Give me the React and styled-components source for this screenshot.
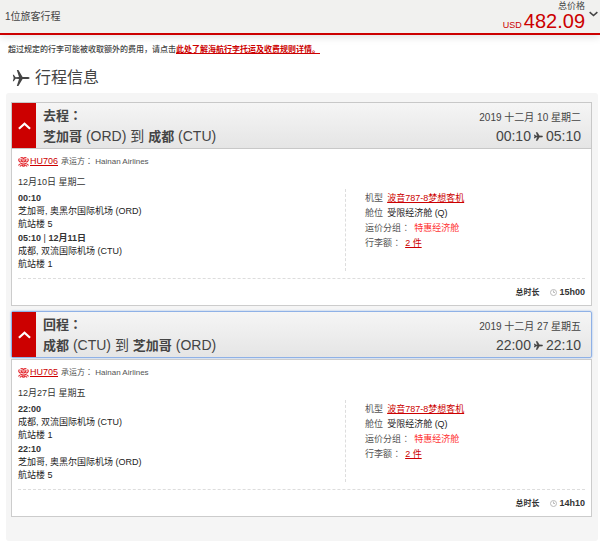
import { useState } from "react";
import styled, { createGlobalStyle } from "styled-components";

const GlobalStyle = createGlobalStyle`
  * {
    box-sizing: border-box;
  }
  body {
    margin: 0;
    background-color: #fff;
    color: #444;
    font-family: "Liberation Sans", "Noto Sans CJK SC", sans-serif;
    font-size: 9px;
    line-height: 13px;
  }
  button {
    font: inherit;
    color: inherit;
    cursor: pointer;
  }
`;

const TopBar = styled.header`
  display: flex;
  justify-content: space-between;
  height: 35px;
  padding-left: 5px;
  background-color: #f1f1ef;
  border-bottom: 2px solid #cc0000;
  box-shadow: 0 2px 8px rgba(0, 0, 0, 0.12);
`;

const Travellers = styled.div`
  font-size: 10px;
  line-height: 33px;
`;

const PriceBox = styled.div`
  display: flex;
  gap: 4px;
`;

const PriceLabel = styled.div`
  line-height: 12px;
  text-align: right;
`;

const Price = styled.div`
  color: #cc0000;
  font-size: 20px;
  line-height: 18px;
`;

const Currency = styled.span`
  font-size: 9px;
  margin-right: 2px;
`;

const PriceToggle = styled.button`
  display: flex;
  align-items: center;
  width: 11px;
  height: 28px;
  padding: 0;
  border: 0;
  background: none;
`;

const Notice = styled.p`
  margin: 8px 8px 0;
  font-size: 8px;
  font-weight: 500;
  line-height: 13px;
`;

const Link = styled.a`
  color: #cc0000;
  text-decoration: underline;
  font-weight: ${(props) => (props.$bold ? 700 : 400)};
`;

const Title = styled.h1`
  display: flex;
  align-items: center;
  gap: 5px;
  margin: 12px 12px 5px;
  font-size: 16px;
  font-weight: 400;
  line-height: 20px;
`;

const Panel = styled.main`
  display: flex;
  flex-direction: column;
  gap: 5px;
  margin: 0 2px 0 6px;
  padding: 9px 6px 24px 5px;
  background-color: #f5f5f5;
  border-radius: 3px;
`;

const CardHead = styled.button`
  display: flex;
  width: 100%;
  height: 47px;
  padding: 0;
  text-align: left;
  background: linear-gradient(#f5f5f5, #e5e5e5);
  border: 1px solid ${(props) => (props.$active ? "#8fb1e6" : "#c8c8c8")};
  border-radius: ${(props) => (props.$active ? "2px" : "0")};
  box-shadow: ${(props) => (props.$active ? "0 0 2px #8fb1e6" : "none")};
  outline: none;
`;

const Marker = styled.span`
  display: flex;
  align-items: center;
  justify-content: center;
  align-self: stretch;
  width: 24px;
  color: #fff;
  background-color: #cc0000;
`;

const Route = styled.span`
  flex: 1;
  padding: 2px 0 0 7px;
  font-size: 14px;
  line-height: 20px;
`;

const RouteLine = styled.span`
  display: block;
`;

const City = styled.strong`
  font-size: 13px;
`;

// full-width colon, centred in its cell
const Colon = styled.span`
  font-family: "Noto Sans CJK TC", sans-serif;
  line-height: 1;
`;

const When = styled.span`
  padding: 6px 10px 0 0;
  text-align: right;
`;

const DateText = styled.span`
  display: block;
  font-size: 10px;
  line-height: 18px;
`;

const Times = styled.span`
  display: flex;
  align-items: center;
  justify-content: flex-end;
  gap: 3px;
  font-size: 14px;
  line-height: 18px;
`;

const CardBody = styled.div`
  margin-top: ${(props) => (props.$active ? "1px" : "0")};
  padding: 6px 6px 0;
  background-color: #fff;
  border: 1px solid #ccc;
  border-top-width: ${(props) => (props.$active ? "1px" : "0")};
`;

const Carrier = styled.div`
  display: flex;
  align-items: center;
  gap: 1px;
  margin-bottom: 8px;
`;

const CarrierName = styled.span`
  margin-left: 2px;
  color: #555;
  font-size: 8px;
`;

const Columns = styled.div`
  display: grid;
  grid-template-columns: 15fr 11fr;
  padding-bottom: 7px;
  border-bottom: 1px dashed #ddd;
`;

const Stops = styled.div`
  color: #222;
`;

const Day = styled.div`
  height: 15px;
  color: #333;
`;

const StopTime = styled.div`
  line-height: 14px;
  color: #333;
`;

const Details = styled.dl`
  margin: 13px 0 0;
  padding: 2px 0 20px 19px;
  border-left: 1px dashed #ddd;
`;

const Detail = styled.div`
  display: flex;
  gap: 4px;
  height: 15px;
  line-height: 15px;
  dt {
    color: #555;
  }
  dd {
    margin: 0;
    color: ${(props) => (props.$highlight ? "#ff3333" : "#222")};
  }
`;

const Total = styled.div`
  display: flex;
  align-items: center;
  justify-content: flex-end;
  height: 26px;
  color: #333;
  font-weight: 700;
`;

const TotalLabel = styled.span`
  margin-right: 11px;
  font-size: 8px;
`;

const Clock = styled.svg`
  margin-right: 2px;
`;

const Plane = ({ size, heavy }) => (
  <svg
    width={size}
    height={size}
    viewBox="0 0 18 18"
    fill="currentColor"
    stroke="currentColor"
    strokeWidth={heavy ? 1.4 : 0}
    aria-hidden="true"
  >
    <path d="M17.6 9c0-.6-1-1-2.2-1H10.6L6.4 1H4.8L7 8 3.6 8.2 1.8 5.8H.8L1.7 9l-.9 3.2h1l1.8-2.4L7 10l-2.2 7h1.6l4.2-7h4.8c1.2 0 2.2-.4 2.2-1z" />
  </svg>
);

const Chevron = ({ up, width, height }) => (
  <svg width={width} height={height} viewBox="0 0 14 8" fill="none" stroke="currentColor" strokeWidth="2.4" aria-hidden="true">
    <path d={up ? "M1 7l6-5.4L13 7" : "M1 1l6 5.4L13 1"} />
  </svg>
);

const AirlineLogo = () => (
  <svg width="11" height="10" viewBox="0 0 22 20" fill="none" stroke="#e3262d" strokeWidth="2.2" aria-hidden="true">
    <path d="M3 3C0 6 2 10 6 10M19 3c3 3 1 7-3 7" />
    <path d="M1 17c1-2 2-3 4-3M21 17c-1-2-2-3-4-3M4 19c1-2 2-2 3-2M18 19c-1-2-2-2-3-2" />
    <path d="M5 2c2-1 4-1 6 1 2-2 4-2 6-1M6 4c0 4 2 6 5 6s5-2 5-6" />
    <path d="M8 6h6M5 12c4 3 8 3 12 0M7 16c3 3 5 3 8 0" />
  </svg>
);

const flights = [
  {
    id: "out",
    label: "去程",
    from: { city: "芝加哥", code: "ORD" },
    to: { city: "成都", code: "CTU" },
    date: "2019 十二月 10 星期二",
    depart: "00:10",
    arrive: "05:10",
    flight: "HU706",
    day: "12月10日 星期二",
    stops: [
      { time: "00:10", place: "芝加哥, 奥黑尔国际机场 (ORD)", terminal: "航站楼 5" },
      { time: "05:10", day: "12月11日", place: "成都, 双流国际机场 (CTU)", terminal: "航站楼 1" },
    ],
    total: "15h00",
  },
  {
    id: "back",
    label: "回程",
    from: { city: "成都", code: "CTU" },
    to: { city: "芝加哥", code: "ORD" },
    date: "2019 十二月 27 星期五",
    depart: "22:00",
    arrive: "22:10",
    flight: "HU705",
    day: "12月27日 星期五",
    stops: [
      { time: "22:00", place: "成都, 双流国际机场 (CTU)", terminal: "航站楼 1" },
      { time: "22:10", place: "芝加哥, 奥黑尔国际机场 (ORD)", terminal: "航站楼 5" },
    ],
    total: "14h10",
  },
];

const FlightCard = ({ flight, active, onSelect }) => {
  const [open, setOpen] = useState(true);

  const toggle = () => {
    setOpen(!open);
    onSelect(flight.id);
  };

  return (
    <section>
      <CardHead type="button" $active={active} aria-expanded={open} onClick={toggle}>
        <Marker>
          <Chevron up={open} width={13} height={8} />
        </Marker>
        <Route>
          <RouteLine>
            <City>
              {flight.label}
              <Colon>：</Colon>
            </City>
          </RouteLine>
          <RouteLine>
            <City>{flight.from.city}</City> ({flight.from.code}) 到{" "}
            <City>{flight.to.city}</City> ({flight.to.code})
          </RouteLine>
        </Route>
        <When>
          <DateText>{flight.date}</DateText>
          <Times>
            {flight.depart}
            <Plane size={9} heavy />
            {flight.arrive}
          </Times>
        </When>
      </CardHead>
      {open && (
        <CardBody $active={active}>
          <Carrier>
            <AirlineLogo />
            <Link href="#flight">{flight.flight}</Link>
            <CarrierName>
              承运方<Colon>：</Colon> Hainan Airlines
            </CarrierName>
          </Carrier>
          <Columns>
            <Stops>
              <Day>{flight.day}</Day>
              {flight.stops.map((stop) => (
                <div key={stop.time}>
                  <StopTime>
                    <strong>{stop.time}</strong>
                    {stop.day && (
                      <>
                        {" | "}
                        <strong>{stop.day}</strong>
                      </>
                    )}
                  </StopTime>
                  <div>{stop.place}</div>
                  <div>{stop.terminal}</div>
                </div>
              ))}
            </Stops>
            <Details>
              <Detail>
                <dt>机型</dt>
                <dd>
                  <Link href="#aircraft">波音787-8梦想客机</Link>
                </dd>
              </Detail>
              <Detail>
                <dt>舱位</dt>
                <dd>受限经济舱 (Q)</dd>
              </Detail>
              <Detail $highlight>
                <dt>
                  运价分组<Colon>：</Colon>
                </dt>
                <dd>特惠经济舱</dd>
              </Detail>
              <Detail>
                <dt>
                  行李额<Colon>：</Colon>
                </dt>
                <dd>
                  <Link href="#baggage">2 件</Link>
                </dd>
              </Detail>
            </Details>
          </Columns>
          <Total>
            <TotalLabel>总时长</TotalLabel>
            <Clock width="7" height="7" viewBox="0 0 14 14" fill="none" stroke="#bbb" strokeWidth="2" aria-hidden="true">
              <circle cx="7" cy="7" r="6" />
              <path d="M7 3v4h3" />
            </Clock>
            {flight.total}
          </Total>
        </CardBody>
      )}
    </section>
  );
};

export default function App() {
  const [selected, setSelected] = useState("back");

  return (
    <>
      <GlobalStyle />
      <TopBar>
        <Travellers>1位旅客行程</Travellers>
        <PriceBox>
          <div>
            <PriceLabel>总价格</PriceLabel>
            <Price>
              <Currency>USD</Currency>
              482.09
            </Price>
          </div>
          <PriceToggle type="button" aria-label="总价格">
            <Chevron width={9} height={6} />
          </PriceToggle>
        </PriceBox>
      </TopBar>
      <Notice>
        超过规定的行李可能被收取额外的费用，请点击
        <Link href="#rules" $bold>
          此处了解海航行李托运及收费规则详情。
        </Link>
      </Notice>
      <Title>
        <Plane size={18} />
        行程信息
      </Title>
      <Panel>
        {flights.map((flight) => (
          <FlightCard
            key={flight.id}
            flight={flight}
            active={selected === flight.id}
            onSelect={setSelected}
          />
        ))}
      </Panel>
    </>
  );
}
